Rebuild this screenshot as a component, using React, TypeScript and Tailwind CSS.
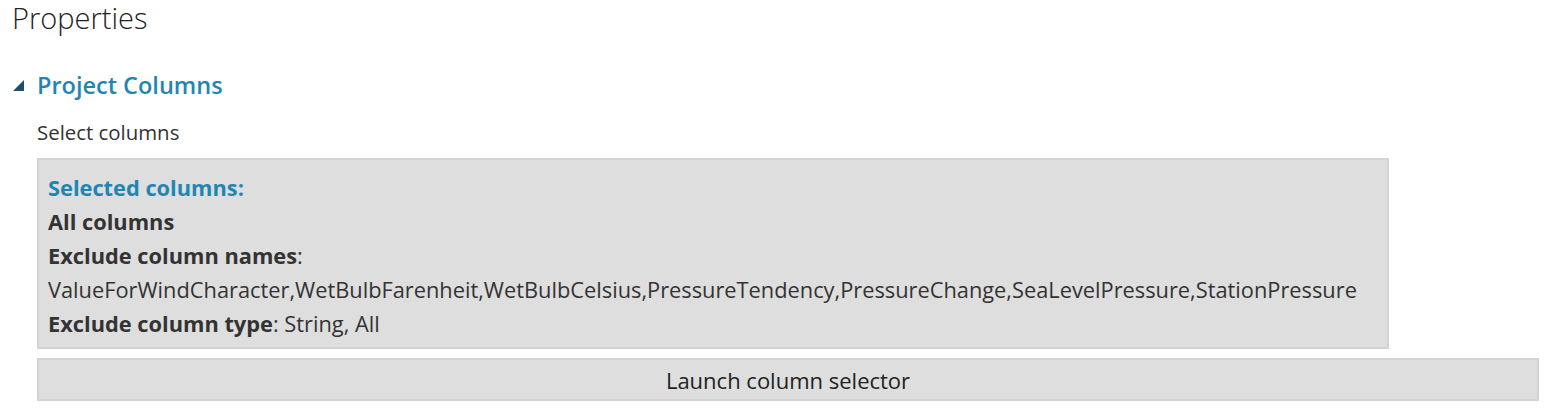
export default function App() {
  return (
    <div className="min-h-[416px] w-[1559px] bg-white text-[#333] font-['Open_Sans',sans-serif]">
      <div className="pl-[12px] pt-[1px]">
        <h1 className="text-[29px] font-light leading-[34px] text-[#222]">Properties</h1>
      </div>

      <div className="mt-[33px] flex items-center pl-[13px]">
        <svg width="11" height="11" viewBox="0 0 11 11" className="mr-[13px]">
          <polygon points="11,0 11,11 0,11" fill="#1d4f6f" />
        </svg>
        <h2 className="text-[23.5px] font-semibold leading-[34px] text-[#1f86b4]">Project Columns</h2>
      </div>

      <div className="pl-[37px] pr-[20px]">
        <p className="mt-[18px] text-[20.4px] leading-[24px] text-[#333]">Select columns</p>

        <div className="mt-[14px] w-[1352px] border-2 border-[#d3d3d3] bg-[#dedede] px-[9px] pt-[11px] pb-[6px] text-[21.8px] leading-[34px] text-[#333]">
          <div className="font-bold text-[#1f86b4]">Selected columns:</div>
          <div className="font-bold">All columns</div>
          <div>
            <span className="font-bold">Exclude column names</span>:
          </div>
          <div>
            ValueForWindCharacter,WetBulbFarenheit,WetBulbCelsius,PressureTendency,PressureChange,SeaLevelPressure,StationPressure
          </div>
          <div>
            <span className="font-bold">Exclude column type</span>: String, All
          </div>
        </div>

        <button className="mt-[9px] h-[43px] w-[1502px] border-2 border-[#d3d3d3] bg-[#dedede] text-[22px] leading-[34px] text-[#222]">
          Launch column selector
        </button>
      </div>
    </div>
  );
}
